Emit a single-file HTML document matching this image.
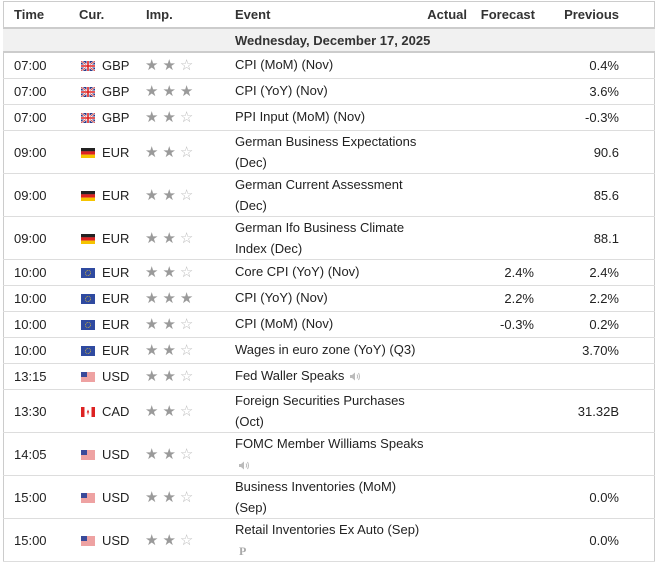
<!DOCTYPE html>
<html><head><meta charset="utf-8"><style>
body{margin:0;background:#fff;font-family:"Liberation Sans",Arial,sans-serif;font-size:13px;color:#222;width:658px;height:568px;overflow:hidden;position:relative}
.wrap{position:absolute;left:3px;top:1px;width:652px;height:561px;border:1px solid #ccc;border-bottom:none;box-sizing:border-box}
.r{position:absolute;left:3px;width:652px;border-bottom:1px solid #ddd;box-sizing:border-box}
.c{position:absolute;white-space:nowrap}
.t{left:11px}.cur{left:99px}.fl{left:78px;width:14px;height:10px}
.st{left:142px;color:#9a9a9a;font-size:15px;letter-spacing:4px}
.st i{font-style:normal;color:#bbb}
.ev{left:232px;line-height:21px}
.a{right:188px}.f{right:121px}.p{right:36px}
.h{font-weight:bold;color:#333}
.spk{display:inline-block;vertical-align:middle;margin-left:5px}
</style></head><body>
<div class="wrap"></div>
<div class="r" style="top:1px;height:28px;border-bottom:2px solid #ccc">
<div class="c h t" style="top:6px">Time</div><div class="c h" style="left:76px;top:6px">Cur.</div><div class="c h" style="left:143px;top:6px">Imp.</div><div class="c h" style="left:232px;top:6px">Event</div><div class="c h" style="right:188px;top:6px">Actual</div><div class="c h" style="right:120px;top:6px">Forecast</div><div class="c h" style="right:36px;top:6px">Previous</div>
</div>
<div class="r" style="top:29px;height:24px;background:#f1f1f1;border-bottom:2px solid #ccc"><div class="c h" style="left:232px;top:4px">Wednesday, December 17, 2025</div></div>
<div id="rows"></div>
<script>
const F={GBP:'<svg class="c fl" viewBox="0 0 14 10"><rect width="14" height="10" fill="#2a3a8a"/><path d="M0 0L14 10M14 0L0 10" stroke="#fff" stroke-width="2"/><path d="M0 0L14 10M14 0L0 10" stroke="#c33" stroke-width="0.8"/><path d="M7 0V10M0 5H14" stroke="#fff" stroke-width="3"/><path d="M7 0V10M0 5H14" stroke="#d22" stroke-width="1.6"/></svg>',
EUD:'<svg class="c fl" viewBox="0 0 14 10"><rect width="14" height="3.4" fill="#222"/><rect y="3.3" width="14" height="3.4" fill="#d22"/><rect y="6.6" width="14" height="3.4" fill="#f5c400"/></svg>',
EUR:'<svg class="c fl" viewBox="0 0 14 10"><rect width="14" height="10" fill="#2f4aa0"/><circle cx="7" cy="5" r="2.6" fill="none" stroke="#e8c530" stroke-width="0.8" stroke-dasharray="0.8 0.8"/></svg>',
USD:'<svg class="c fl" viewBox="0 0 14 10"><rect width="14" height="10" fill="#fff"/><path d="M0 1H14M0 3H14M0 5H14M0 7H14M0 9H14" stroke="#d44" stroke-width="1"/><rect width="6" height="5" fill="#3a4a9a"/></svg>',
CAD:'<svg class="c fl" viewBox="0 0 14 10"><rect width="14" height="10" fill="#fff"/><rect width="3.5" height="10" fill="#d22"/><rect x="10.5" width="3.5" height="10" fill="#d22"/><path d="M7 2.5L8.3 5.5H5.7Z" fill="#d22"/><rect x="6.6" y="5" width="0.8" height="2.5" fill="#d22"/></svg>'};
const spk='<svg class="spk" width="12" height="11" viewBox="0 0 12 11"><path d="M1 4H3L6 1.5V9.5L3 7H1Z" fill="#bbb"/><path d="M8 3.5Q9.3 5.5 8 7.5M9.5 2Q11.5 5.5 9.5 9" stroke="#bbb" stroke-width="1" fill="none"/></svg>';
const R=[
['07:00','GBP',2,'CPI (MoM) (Nov)','','0.4%',26],
['07:00','GBP',3,'CPI (YoY) (Nov)','','3.6%',26],
['07:00','GBP',2,'PPI Input (MoM) (Nov)','','-0.3%',26],
['09:00','EUD',2,'German Business Expectations<br>(Dec)','','90.6',43],
['09:00','EUD',2,'German Current Assessment<br>(Dec)','','85.6',43],
['09:00','EUD',2,'German Ifo Business Climate<br>Index (Dec)','','88.1',43],
['10:00','EUR',2,'Core CPI (YoY) (Nov)','2.4%','2.4%',26],
['10:00','EUR',3,'CPI (YoY) (Nov)','2.2%','2.2%',26],
['10:00','EUR',2,'CPI (MoM) (Nov)','-0.3%','0.2%',26],
['10:00','EUR',2,'Wages in euro zone (YoY) (Q3)','','3.70%',26],
['13:15','USD',2,'Fed Waller Speaks'+spk,'','',26],
['13:30','CAD',2,'Foreign Securities Purchases<br>(Oct)','','31.32B',43],
['14:05','USD',2,'FOMC Member Williams Speaks<br>'+spk.replace('margin-left:5px','').replace('class="spk"','class="spk" style="margin-left:3px"'),'','',43],
['15:00','USD',2,'Business Inventories (MoM)<br>(Sep)','','0.0%',43],
['15:00','USD',2,'Retail Inventories Ex Auto (Sep)<br><span style="font-family:Liberation Serif;font-weight:bold;color:#aaa;font-size:12px;margin-left:4px">P</span>','','0.0%',43]];
let y=53,h='';
for(const r of R){const H=r[6],m=H/2-8;
const stars='★★'+(r[2]==3?'★':'<i>☆</i>');
h+=`<div class="r" style="top:${y}px;height:${H}px"><div class="c t" style="top:${m}px">${r[0]}</div>${F[r[1]].replace('class="c fl"','class="c fl" style="top:'+(H/2-5)+'px"')}<div class="c cur" style="top:${m}px">${r[1]=='EUD'?'EUR':r[1]}</div><div class="c st" style="top:${m-2}px">${stars}</div><div class="c ev" style="top:${H==26?m-4:0}px">${r[3]}</div><div class="c f" style="top:${m}px">${r[4]}</div><div class="c p" style="top:${m}px">${r[5]}</div></div>`;y+=H;}
document.getElementById('rows').innerHTML=h;
</script>
</body></html>
